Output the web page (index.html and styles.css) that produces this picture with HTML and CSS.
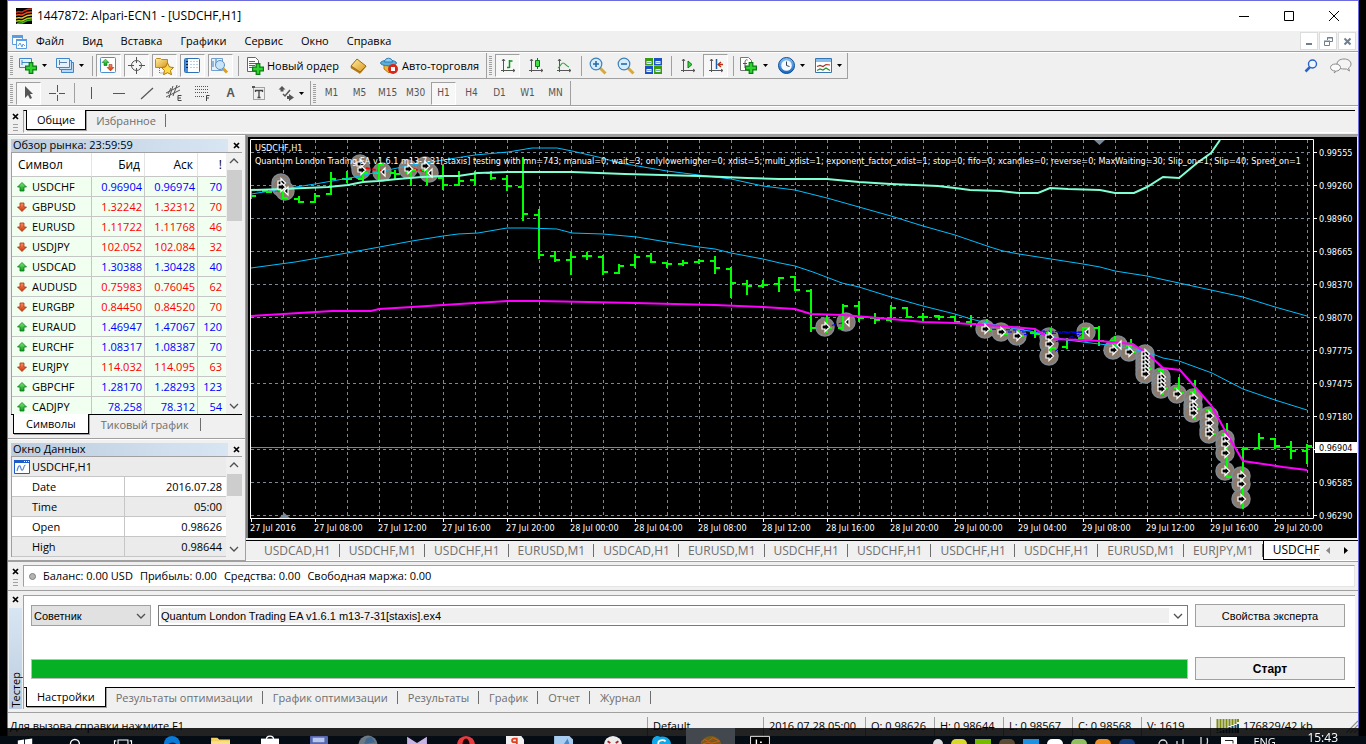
FILE: index.html
```html
<!DOCTYPE html>
<html lang="ru">
<head>
<meta charset="utf-8">
<title>1447872: Alpari-ECN1 - [USDCHF,H1]</title>
<link rel="stylesheet" href="styles.css">
</head>
<body>
<svg class="defs" aria-hidden="true">
  <defs>
    <linearGradient id="gGreen" x1="0" y1="0" x2="0" y2="1"><stop offset="0" stop-color="#7be87b"/><stop offset="1" stop-color="#0a9a1a"/></linearGradient>
    <linearGradient id="gRed" x1="0" y1="0" x2="0" y2="1"><stop offset="0" stop-color="#ff9060"/><stop offset="1" stop-color="#c83208"/></linearGradient>
    <linearGradient id="gGold" x1="0" y1="0" x2="1" y2="1"><stop offset="0" stop-color="#fff0a0"/><stop offset="1" stop-color="#d9951c"/></linearGradient>
    <linearGradient id="gBlue" x1="0" y1="0" x2="0" y2="1"><stop offset="0" stop-color="#8cc4f4"/><stop offset="1" stop-color="#1266c4"/></linearGradient>
  </defs>
  <symbol id="up" viewBox="0 0 12 12"><path d="M6 1.500l4.500 4.500H8v4H4V6H1.500z" fill="url(#gGreen)" stroke="#0b7a18" stroke-width=".8"/></symbol>
  <symbol id="down" viewBox="0 0 12 12"><path d="M6 10.500l4.500-4.500H8V2H4v4H1.500z" fill="url(#gRed)" stroke="#a83210" stroke-width=".8"/></symbol>
  <symbol id="caret" viewBox="0 0 5 3"><path d="M0 0h5L2.500 3z" fill="#000"/></symbol>
  <symbol id="chev" viewBox="0 0 10 6"><path d="M1 1l4 4 4-4" fill="none" stroke="currentColor" stroke-width="1.300"/></symbol>
  <symbol id="x" viewBox="0 0 7 7"><path d="M1 1l5 5M6 1L1 6" stroke="#000" stroke-width="1.700"/></symbol>
  <symbol id="logo" viewBox="0 0 16 16"><path d="M0 0h16v16H0z" fill="#000"/><g fill="none" stroke-width="1.500"><path d="M0 4.500c2-2 4 0 6-.500s4-3.500 10-3" stroke="#e02818"/><path d="M0 7.500c2-2 4 0 6-.500s4-3.500 10-3" stroke="#e85020"/><path d="M0 10.500c2-2 4 0 6-.500s4-3.500 10-3" stroke="#e8c020"/><path d="M0 13.500c2-2 4 0 6-.500s4-3.500 10-3" stroke="#a8d020"/><path d="M1 16c2-2 3-.500 5-1s4-3.500 10-3" stroke="#40b820"/></g></symbol>
  <symbol id="plus" viewBox="0 0 10 10"><path d="M3.500.500h3v3h3v3h-3v3h-3v-3h-3v-3h3z" fill="#2fd52f" stroke="#087a12"/></symbol>
</svg>

<div class="window">
  <header class="titlebar">
    <svg class="i16"><use href="#logo"/></svg>
    <h1>1447872: Alpari-ECN1 - [USDCHF,H1]</h1>
    <div class="winbtns">
      <button aria-label="Свернуть"><svg width="10" height="10"><path d="M0 5.500h10" stroke="#000"/></svg></button>
      <button aria-label="Развернуть"><svg width="10" height="10"><path d="M.5.5h9v9h-9z" fill="none" stroke="#000"/></svg></button>
      <button aria-label="Закрыть"><svg width="10" height="10"><path d="M0 0l10 10M10 0L0 10" stroke="#000"/></svg></button>
    </div>
  </header>

  <nav class="menubar">
    <svg class="menuicon" width="15" height="15"><path d="M.5 1.500h10v9H.500z" fill="#fff" stroke="#5b9be0"/><path d="M0 1h11v3H0z" fill="#5b9be0"/><path d="M4.500 5.500h10v9h-10z" fill="#fff" stroke="#5b9be0"/><path d="M4 5h11v2H4z" fill="#5b9be0"/><path d="M6 12l2-3 2 4 1-3 2 2" fill="none" stroke="#5b9be0"/></svg>
    <button>Файл</button><button>Вид</button><button>Вставка</button><button>Графики</button><button>Сервис</button><button>Окно</button><button>Справка</button>
    <div class="mdibtns">
      <button aria-label="Свернуть окно"><svg width="9" height="9"><path d="M1 7h6" stroke="#6f7f8f" stroke-width="2"/></svg></button>
      <button aria-label="Восстановить окно"><svg width="9" height="9"><path d="M3.500 3V.5h5v4H6M3 1h6M.5 4.500h5v4h-5zM0 4h6" fill="none" stroke="#6f7f8f"/></svg></button>
      <button aria-label="Закрыть окно"><svg width="9" height="9"><path d="M1.500 1.500l6 6M7.500 1.500l-6 6" stroke="#6f7f8f" stroke-width="2"/></svg></button>
    </div>
  </nav>

  <div class="toolbar">
    <div class="group">
      <i class="grip"></i>
      <button class="tb drop" aria-label="Новый график"><svg width="18" height="18"><path d="M.5 1.500h12v9H.500z" fill="#e4f1fd" stroke="#3f86c8"/><path d="M3 3v5M3 5.500h7" stroke="#3f86c8" fill="none"/><use href="#plus" x="6" y="5" width="12" height="12"/></svg><svg class="caret"><use href="#caret"/></svg></button>
      <button class="tb drop" aria-label="Профили"><svg width="18" height="18"><path d="M5.500 5.500h12v10h-12z" fill="#b9d8f5" stroke="#3f86c8"/><path d="M3.500 3.500h12v9h-12z" fill="#cfe4f8" stroke="#3f86c8"/><path d="M.5 1.500h13v9H.500z" fill="#e4f1fd" stroke="#3f86c8"/><path d="M3.500 3v5M3 5.500h8" stroke="#5b7fa8" fill="none"/></svg><svg class="caret"><use href="#caret"/></svg></button>
      <i class="sep"></i>
      <button class="tb on" aria-label="Обзор рынка"><svg width="17" height="17"><rect x=".5" y=".5" width="15" height="15" rx="1" fill="#fff" stroke="#4a90d0"/><use href="#up" x="1" y="1" width="9" height="9"/><use href="#down" x="6" y="6" width="9" height="9"/></svg></button>
      <button class="tb on" aria-label="Окно данных"><svg width="17" height="17"><circle cx="8.500" cy="8.500" r="5" fill="none" stroke="#555"/><path d="M8.500 0v6M8.500 11v6M0 8.500h6M11 8.500h6" stroke="#555"/></svg></button>
      <button class="tb on" aria-label="Навигатор"><svg width="19" height="18"><path d="M.5 2.500l1-1h4l1 1h6v8H.500z" fill="url(#gGold)" stroke="#b98a1c"/><path d="M4.500 11v5h4" stroke="#777" fill="none" stroke-dasharray="1 1"/><path d="M12.500 6l2 4 4 .5-3 3 1 4.200-4-2-4 2 1-4.200-3-3 4-.5z" fill="#ffd84a" stroke="#a8790f"/></svg></button>
      <button class="tb on" aria-label="Терминал"><svg width="17" height="16"><rect x=".5" y=".5" width="15" height="14" rx="1" fill="#fff" stroke="#2f6fb4"/><path d="M1 1h3v13H1z" fill="#4a8fd8"/><path d="M2 3.500h2M2 6.500h2M2 9.500h2" stroke="#123"/><path d="M6 3.500h9M6 6.500h9M6 9.500h9" stroke="#b7cfe8" stroke-dasharray="2 1"/></svg></button>
      <button class="tb on" aria-label="Тестер стратегий"><svg width="19" height="18"><path d="M.5 1.500h11v12H.500z" fill="#e4f1fd" stroke="#6fa0d0"/><path d="M2 4v6M5 2v6M8 4v5" stroke="#4878a8"/><path d="M12 11.500l4 4" stroke="#d8a020" stroke-width="3"/><circle cx="9" cy="8" r="4.500" fill="#c8e4f8" stroke="#5b8fc0"/></svg></button>
      <i class="sep"></i>
      <button class="tb wide"><svg width="17" height="18"><path d="M.5.5h8l3 3v11H.500z" fill="#fff" stroke="#666"/><path d="M2 4.500h6M2 6.500h7M2 8.500h6M2 10.500h5" stroke="#666"/><use href="#plus" x="5" y="6" width="12" height="12"/></svg>Новый ордер</button>
      <button class="tb" aria-label="Редактор MetaEditor"><svg width="18" height="16"><path d="M1 8l6-7 9 7-6 6z" fill="url(#gGold)" stroke="#9a6a10"/><path d="M1 8v2l9 5.500 6-7V8l-6 6z" fill="#b87818" stroke="#9a6a10" stroke-width=".5"/></svg></button>
      <button class="tb wide"><svg width="19" height="18"><path d="M4 7v5l5 4 4-5z" fill="#f0b832" stroke="#b07c14"/><ellipse cx="8.500" cy="6" rx="8" ry="2.800" fill="#5aaede" stroke="#2f7cae"/><path d="M4.500 5c0-5 8-5 8 0z" fill="#8fd0f4" stroke="#2f7cae"/><circle cx="13" cy="12" r="5" fill="#d8281a"/><path d="M11 10h4v4h-4z" fill="#fff"/></svg>Авто-торговля</button>
    </div>
    <div class="group">
      <i class="grip"></i>
      <button class="tb on" aria-label="Бары"><svg width="16" height="16"><path d="M3.500 1v13M1 12.500h14M2 3l1.500-2L5 3M13 11l2 1.500-2 1.500" fill="none" stroke="#555"/><path d="M9.500 2v8M7 9.500h2.500M9.500 3h3" stroke="#0a9a1a" stroke-width="1.500"/></svg></button>
      <button class="tb" aria-label="Японские свечи"><svg width="16" height="16"><path d="M3.500 1v13M1 12.500h14M2 3l1.500-2L5 3M13 11l2 1.500-2 1.500" fill="none" stroke="#555"/><path d="M9.500 0v11" stroke="#087a12"/><path d="M7.500 2.500h4v6h-4z" fill="#3fe03f" stroke="#087a12"/></svg></button>
      <button class="tb" aria-label="Линия"><svg width="16" height="16"><path d="M3.500 1v13M1 12.500h14M2 3l1.500-2L5 3M13 11l2 1.500-2 1.500" fill="none" stroke="#555"/><path d="M2 10c2-1 3-5 5-5s3 3 6 4" fill="none" stroke="#2fa040" stroke-width="1.200"/></svg></button>
      <i class="sep"></i>
      <button class="tb" aria-label="Увеличить"><svg width="18" height="18"><path d="M11 11l5.500 5.500" stroke="#d8a838" stroke-width="3"/><circle cx="7" cy="7" r="5.800" fill="#d4ecfc" stroke="#3f80b8" stroke-width="1.200"/><path d="M4 7h6M7 4v6" stroke="#2868a8" stroke-width="1.600"/></svg></button>
      <button class="tb" aria-label="Уменьшить"><svg width="18" height="18"><path d="M11 11l5.500 5.500" stroke="#d8a838" stroke-width="3"/><circle cx="7" cy="7" r="5.800" fill="#d4ecfc" stroke="#3f80b8" stroke-width="1.200"/><path d="M4 7h6" stroke="#2868a8" stroke-width="1.600"/></svg></button>
      <button class="tb" aria-label="Окна рядом"><svg width="17" height="16"><path d="M0 0h8v7.500H0zM9 8h8v8H9z" fill="#3c9c10"/><path d="M9 0h8v7.500H9zM0 8h8v8H0z" fill="#1c50c8"/><path d="M1.500 3h5v3h-5zM10.500 3h5v3h-5zM1.500 11h5v3h-5zM10.500 11h5v3h-5z" fill="#e4f0fc"/><path d="M2 4.500h4M11 4.500h4M2 12.500h4M11 12.500h4" stroke="#7fa8c8"/></svg></button>
      <i class="sep"></i>
      <button class="tb" aria-label="Автопрокрутка"><svg width="16" height="16"><path d="M3.500 1v13M1 12.500h14M2 3l1.500-2L5 3M13 11l2 1.500-2 1.500" fill="none" stroke="#555"/><path d="M8 3l4 3.500L8 10z" fill="#3fd03f" stroke="#087a12"/></svg></button>
      <button class="tb on" aria-label="Сдвиг графика"><svg width="16" height="16"><path d="M3.500 1v13M1 12.500h14M2 3l1.500-2L5 3M13 11l2 1.500-2 1.500" fill="none" stroke="#555"/><path d="M8.500 1v10" stroke="#1c60a8" stroke-width="1.500"/><path d="M15 6.500h-4M13 4l-3 2.500L13 9" fill="none" stroke="#b83010" stroke-width="1.300"/></svg></button>
      <i class="sep"></i>
      <button class="tb drop" aria-label="Индикаторы"><svg width="18" height="18"><path d="M.5.5h8l3 3v10H.500z" fill="#fff" stroke="#777"/><path d="M7.500 3c-2-1-2.500 1-2.500 3v5M3 6.500h4" fill="none" stroke="#555"/><use href="#plus" x="5" y="5" width="12" height="12"/></svg><svg class="caret"><use href="#caret"/></svg></button>
      <button class="tb drop" aria-label="Периоды"><svg width="17" height="17"><circle cx="8.500" cy="8.500" r="8" fill="url(#gBlue)" stroke="#0b4c94"/><circle cx="8.500" cy="8.500" r="5.300" fill="#f4faff"/><path d="M8.500 4.500v4l3 1" fill="none" stroke="#345"/></svg><svg class="caret"><use href="#caret"/></svg></button>
      <button class="tb drop" aria-label="Шаблоны"><svg width="17" height="16"><path d="M.5.5h16v14H.500z" fill="#fff" stroke="#3474b0"/><path d="M1 1h15v3H1z" fill="#8cbcec"/><path d="M2 8.500l3-1 3 1 3-2 4 .5" fill="none" stroke="#a83020" stroke-width="1.200"/><path d="M2 12.500l3-1.500 3 1 3-2 4 2.500" fill="none" stroke="#209030" stroke-width="1.200"/></svg><svg class="caret"><use href="#caret"/></svg></button>
    </div>
    <div class="right">
      <button class="tb" aria-label="Поиск"><svg width="14" height="14"><path d="M1.500 12.500l4.500-4.500" stroke="#2a62c8" stroke-width="2.500"/><circle cx="8.500" cy="5" r="4" fill="#eef5ff" stroke="#2a62c8" stroke-width="1.400"/></svg></button>
      <button class="tb" aria-label="Чат"><svg width="22" height="16"><path d="M14 11c-4 0-7-2-7-5s3-5 7-5 7 2 7 5c0 2-1 3-2.500 4l1 3-3-2z" fill="#f4f4f4" stroke="#8a8a8a"/><path d="M5.500 13c-3 0-5-1.500-5-3.500s2-3.500 5-3.500 5 1.500 5 3.500-2 3.500-4 3.500l-2.500 2z" fill="#fafafa" stroke="#8a8a8a"/></svg></button>
    </div>
  </div>

  <div class="toolbar second">
    <div class="group">
      <i class="grip"></i>
      <button class="tb on" aria-label="Курсор"><svg width="12" height="16"><path d="M2 1l8 8H7l2 4-2 1-2-4-3 3z" fill="#555"/></svg></button>
      <button class="tb" aria-label="Перекрестие"><svg width="16" height="16"><path d="M8.500 0v7M8.500 10v6M0 8.500h7M10 8.500h6" stroke="#555"/></svg></button>
      <i class="sep"></i>
      <button class="tb" aria-label="Вертикальная линия"><svg width="16" height="16"><path d="M8.500 2v12" stroke="#555"/></svg></button>
      <button class="tb" aria-label="Горизонтальная линия"><svg width="16" height="16"><path d="M2 8.500h12" stroke="#555"/></svg></button>
      <button class="tb" aria-label="Трендовая линия"><svg width="16" height="16"><path d="M2 14L14 3" stroke="#555" stroke-width="1.200"/></svg></button>
      <button class="tb" aria-label="Канал"><svg width="18" height="18"><path d="M0 9L14 2M0 13l14-7M3 14l4-12M7 12l4-11M2 10l3-6" stroke="#555"/><path d="M15.500 11.500h-3.500v5h3.500M12 14h3" fill="none" stroke="#444"/></svg></button>
      <button class="tb" aria-label="Фибоначчи"><svg width="18" height="18"><path d="M1 2.500h13M1 5.500h13M1 8.500h13M1 12.500h9" stroke="#555" stroke-dasharray="1 1"/><path d="M15.500 11.500h-3v5.500M12 14h3" fill="none" stroke="#444"/></svg></button>
      <button class="tb tlabel" aria-label="Текст"><b>A</b></button>
      <button class="tb" aria-label="Метка"><svg width="15" height="16"><path d="M2.500 2.500h11v12h-11z" fill="none" stroke="#555" stroke-dasharray="1 1"/><path d="M4.500 7V5.500h7V7M8 5.500v7M6.500 12.500h3" fill="none" stroke="#444" stroke-width="1.300"/><path d="M1 1h3v2H1z" fill="#555"/></svg></button>
      <button class="tb drop" aria-label="Стрелки"><svg width="16" height="16"><path d="M4 1l3.500 3.500h-2v2h-3v-2H.500z M9 11h2V9l5 3.500L11 16v-2H9z" fill="#555"/><path d="M5 9l2 2 5-6" fill="none" stroke="#555" stroke-width="1.500"/></svg><svg class="caret"><use href="#caret"/></svg></button>
    </div>
    <div class="group tf">
      <i class="grip"></i>
      <button class="tb">M1</button><button class="tb">M5</button><button class="tb">M15</button><button class="tb">M30</button><button class="tb on">H1</button><button class="tb">H4</button><button class="tb">D1</button><button class="tb">W1</button><button class="tb">MN</button>
    </div>
  </div>

  <div class="favbar">
    <div class="dock"><button class="close" aria-label="Закрыть панель"><svg width="7" height="7"><use href="#x"/></svg></button><i class="minigrip"></i></div>
    <div class="tabs"><button class="tab active">Общие</button><button class="tab">Избранное</button></div>
  </div>

  <main class="work">
    <aside class="side">
      <section class="pane market">
        <div class="panehead"><h2>Обзор рынка: 23:59:59</h2><button class="close" aria-label="Закрыть обзор рынка"><svg width="7" height="7"><use href="#x"/></svg></button></div>
        <div class="panebody">
          <div class="clip">
          <table class="quotes">
            <colgroup><col class="c1"><col class="c2"><col class="c2"><col></colgroup>
            <thead><tr><th>Символ</th><th>Бид</th><th>Аск</th><th>!</th></tr></thead>
            <tbody>
              <tr class="u"><td><svg><use href="#up"/></svg>USDCHF</td><td>0.96904</td><td>0.96974</td><td>70</td></tr>
              <tr class="d"><td><svg><use href="#down"/></svg>GBPUSD</td><td>1.32242</td><td>1.32312</td><td>70</td></tr>
              <tr class="d"><td><svg><use href="#down"/></svg>EURUSD</td><td>1.11722</td><td>1.11768</td><td>46</td></tr>
              <tr class="d"><td><svg><use href="#down"/></svg>USDJPY</td><td>102.052</td><td>102.084</td><td>32</td></tr>
              <tr class="u"><td><svg><use href="#up"/></svg>USDCAD</td><td>1.30388</td><td>1.30428</td><td>40</td></tr>
              <tr class="d"><td><svg><use href="#down"/></svg>AUDUSD</td><td>0.75983</td><td>0.76045</td><td>62</td></tr>
              <tr class="d"><td><svg><use href="#down"/></svg>EURGBP</td><td>0.84450</td><td>0.84520</td><td>70</td></tr>
              <tr class="u"><td><svg><use href="#up"/></svg>EURAUD</td><td>1.46947</td><td>1.47067</td><td>120</td></tr>
              <tr class="u"><td><svg><use href="#up"/></svg>EURCHF</td><td>1.08317</td><td>1.08387</td><td>70</td></tr>
              <tr class="d"><td><svg><use href="#down"/></svg>EURJPY</td><td>114.032</td><td>114.095</td><td>63</td></tr>
              <tr class="u"><td><svg><use href="#up"/></svg>GBPCHF</td><td>1.28170</td><td>1.28293</td><td>123</td></tr>
              <tr class="u"><td><svg><use href="#up"/></svg>CADJPY</td><td>78.258</td><td>78.312</td><td>54</td></tr>
            </tbody>
          </table>
          </div>
          <div class="scroll"><svg class="chev flip"><use href="#chev"/></svg><i class="thumb"></i><svg class="chev"><use href="#chev"/></svg></div>
        </div>
        <div class="tabs"><button class="tab active">Символы</button><button class="tab">Тиковый график</button></div>
      </section>
      <section class="pane data">
        <div class="panehead"><h2>Окно Данных</h2><button class="close" aria-label="Закрыть окно данных"><svg width="7" height="7"><use href="#x"/></svg></button></div>
        <div class="panebody">
          <div class="clip">
          <table class="values">
            <colgroup><col class="name"><col></colgroup>
            <tbody>
              <tr><th colspan="2" class="symbol"><svg width="16" height="14"><path d="M.5.5h15v13H.500z" fill="#fff" stroke="#1c5cc8"/><path d="M0 0h16v3H0z" fill="#1c5cc8"/><path d="M3 11c1-4 2-6 3-5s1 5 2.500 4 1-5 3-5" fill="none" stroke="#5b84d8" stroke-width="1.200"/><path d="M10 1.500h1M12 1.500h1M14 1.500h1" stroke="#fff"/></svg>USDCHF,H1</th></tr>
              <tr><th>Date</th><td>2016.07.28</td></tr>
              <tr><th>Time</th><td>05:00</td></tr>
              <tr><th>Open</th><td>0.98626</td></tr>
              <tr><th>High</th><td>0.98644</td></tr>
            </tbody>
          </table>
          </div>
          <div class="scroll"><svg class="chev flip"><use href="#chev"/></svg><i class="thumb short"></i><svg class="chev"><use href="#chev"/></svg></div>
        </div>
      </section>
    </aside>

    <section class="chartcol">
      <div class="chart">
        <svg id="chart" viewBox="248 137 1109 401" preserveAspectRatio="xMinYMin meet" role="img" aria-label="USDCHF,H1"></svg>
      </div>
      <div class="charttabs">
        <div class="tablist"><button class="tab">USDCAD,H1</button><button class="tab">USDCHF,M1</button><button class="tab">USDCHF,H1</button><button class="tab">EURUSD,M1</button><button class="tab">USDCAD,H1</button><button class="tab">EURUSD,M1</button><button class="tab">USDCHF,H1</button><button class="tab">USDCHF,H1</button><button class="tab">USDCHF,H1</button><button class="tab">USDCHF,H1</button><button class="tab">EURUSD,M1</button><button class="tab">EURJPY,M1</button><button class="tab active">USDCHF,H1</button></div>
        <div class="arrows"><button aria-label="Назад"><svg width="4" height="7"><path d="M4 0v7L0 3.500z" fill="#888"/></svg></button><button aria-label="Вперёд"><svg width="4" height="7"><path d="M0 0v7l4-3.500z" fill="#000"/></svg></button></div>
      </div>
    </section>
  </main>

  <section class="balance">
    <div class="dock"><button class="close" aria-label="Закрыть терминал"><svg width="7" height="7"><use href="#x"/></svg></button><i class="minigrip"></i></div>
    <p><i class="dot"></i><span>Баланс: 0.00 USD</span><span>Прибыль: 0.00</span><span>Средства: 0.00</span><span>Свободная маржа: 0.00</span></p>
  </section>

  <section class="tester">
    <div class="strip"><button class="close" aria-label="Закрыть тестер"><svg width="7" height="7"><use href="#x"/></svg></button><div class="vlabel"><span>Тестер</span></div></div>
    <div class="testbody">
      <div class="form">
        <label class="combo kind"><select aria-label="Тип"><option>Советник</option></select><svg class="chev"><use href="#chev"/></svg></label>
        <label class="combo expert"><select aria-label="Эксперт"><option>Quantum London Trading EA v1.6.1 m13-7-31[staxis].ex4</option></select><svg class="chev"><use href="#chev"/></svg></label>
        <button class="push">Свойства эксперта</button>
        <div class="bar" role="progressbar" aria-label="Ход теста" aria-valuenow="100"></div>
        <button class="push start">Старт</button>
      </div>
      <div class="tabs"><button class="tab active">Настройки</button><button class="tab">Результаты оптимизации</button><button class="tab">График оптимизации</button><button class="tab">Результаты</button><button class="tab">График</button><button class="tab">Отчет</button><button class="tab">Журнал</button></div>
    </div>
  </section>

  <footer class="status">
    <span class="help">Для вызова справки нажмите F1</span><span class="prof">Default</span><span class="time">2016.07.28 05:00</span><span class="ohlc">O: 0.98626</span><span class="ohlc">H: 0.98644</span><span class="ohlc">L: 0.98567</span><span class="ohlc">C: 0.98568</span><span class="ohlc">V: 1619</span><span class="net"><svg width="23" height="14"><path d="M1.500 0v12M4.500 0v11M7.500 0v10M10.500 0v9M13.500 0v7M16.500 0v6M19.500 0v5M22 0v3" stroke="#7c8c14" stroke-width="2"/><path d="M1.500 14v-1M4.500 14v-2M7.500 14v-3M10.500 14v-4M13.500 14V8M16.500 14V7M19.500 14V6M22 14V5" stroke="#14506c" stroke-width="2"/></svg>176829/42 kb<svg class="sizer" width="12" height="14"><path d="M0 14L12 2M4 14l8-8M8 14l4-4" stroke="#8a8a8a" stroke-width="1.200"/></svg></span>
  </footer>
</div>

<div class="taskbar">
  <div class="apps">
    <a href="#" aria-label="Пуск"><svg viewBox="0 0 24 10"><path d="M4 6l7-1v5H4zM12 5l8-1v6h-8z" fill="#fff"/></svg></a>
    <a href="#" aria-label="Поиск"><svg viewBox="0 0 24 10"><circle cx="13" cy="10" r="5" fill="none" stroke="#fff" stroke-width="1.500"/></svg></a>
    <a href="#" aria-label="Представление задач"><svg viewBox="0 0 24 10"><path d="M6.500 10V5.500h11V10M2.500 10V6.500h2M21.500 10V6.500h-2" fill="none" stroke="#fff" stroke-width="1.200"/></svg></a>
    <a href="#" aria-label="Edge"><svg viewBox="0 0 24 10"><circle cx="12" cy="10" r="9" fill="#0a7ad8"/><path d="M8 10a5 3 0 0 1 9 0z" fill="#04203c"/></svg></a>
    <a href="#" aria-label="Проводник"><svg viewBox="0 0 24 10"><path d="M1 3h7l2 2h12v5H1z" fill="#f4d060"/><path d="M1 7h21v3H1z" fill="#f9e08c"/></svg></a>
    <a href="#" aria-label="Магазин"><svg viewBox="0 0 24 10"><path d="M2 4h20v6H2z" fill="#fff"/><path d="M8 5c0-5 8-5 8 0" fill="none" stroke="#fff" stroke-width="1.500"/></svg></a>
    <a href="#" aria-label="Диск"><svg viewBox="0 0 24 10"><rect x="2" y="1" width="20" height="12" rx="1" fill="#5868b0"/><path d="M5 3h13v5H5z" fill="#b8c4ec"/></svg></a>
    <a href="#" aria-label="Сеть"><svg viewBox="0 0 24 10"><circle cx="12" cy="11" r="10.500" fill="#6c7884"/><path d="M8 10l2-6 6-2 4 6z" fill="#3f6890"/></svg></a>
    <a href="#" aria-label="Visual Studio"><svg viewBox="0 0 24 10"><path d="M1 2l11 7 11-7v8H1z" fill="#c8b4e4"/></svg></a>
    <a href="#" aria-label="Opera"><svg viewBox="0 0 24 10"><ellipse cx="12" cy="11" rx="10" ry="10" fill="#e83c40"/><ellipse cx="12" cy="11" rx="4" ry="7" fill="#1a0808"/></svg></a>
    <a href="#" aria-label="Яндекс"><svg viewBox="0 0 24 10"><path d="M2 1h17l3 4v5H2z" fill="#f0f0f0"/><path d="M14 10V4h-3c-3 0-3 4 0 4h3" fill="none" stroke="#e04020" stroke-width="2"/></svg></a>
    <a href="#" aria-label="Документ"><svg viewBox="0 0 24 10"><path d="M1 1h17l4 4v5H1z" fill="#a8ccf0"/><path d="M12 10l4-6 2 6z" fill="#4f88c8"/></svg></a>
    <a href="#" aria-label="Игра"><svg viewBox="0 0 24 10"><circle cx="12" cy="11" r="10" fill="#ececec"/><path d="M6 7l3 2M18 7l-3 2" stroke="#b02020" stroke-width="2"/></svg></a>
    <a href="#" aria-label="Skype"><svg viewBox="0 0 24 10"><path d="M1 10c-1-9 6-10 9-8 7-2 12 3 12 8z" fill="#10a8e8"/><path d="M8 10c-1-5 6-5 8-3" fill="none" stroke="#fff" stroke-width="2"/></svg></a>
    <a href="#" class="current" aria-label="MetaTrader"><svg viewBox="0 0 24 10"><circle cx="12" cy="13" r="12" fill="#7a5c18"/><path d="M1 8l4-3 4 2 5-4 8 4M3 10l5-2 5 1 8-2" fill="none" stroke="#d06020"/></svg></a>
    <a href="#" aria-label="Консоль"><svg viewBox="0 0 24 10"><path d="M1.500 12V1.500h21V12" fill="#000" stroke="#fff"/><path d="M8 5v5M12 8h2" stroke="#fff" stroke-width="1.500"/></svg></a>
  </div>
  <div class="tray">
    <i class="t1"></i><i class="t2"></i><i class="t3"></i><i class="t4"></i><i class="t5"></i><i class="t6"></i><i class="t7"></i><i class="t8"></i><i class="t9"></i>
    <svg class="sys" width="100" height="7"><path d="M16 7a4 4 0 0 1 8 0M40 7V2M34 7V4M58 0v7M64 1a9 9 0 0 1 0 6" fill="none" stroke="#ddd" stroke-width="1.300"/><path d="M78 0h16v7H78z" fill="#fff"/><path d="M82 3.500h8v3" stroke="#222" fill="none"/></svg>
    <span class="lang">ENG</span>
    <time>15:43</time>
  </div>
</div>
<script src="chart.js"></script>
</body>
</html>
```
FILE: styles.css
```css
* { box-sizing: border-box; }
html, body { height: 100%; }
body {
  margin: 0;
  background: #000;
  color: #000;
  font: 11px/16px "Open Sans", "Noto Sans", sans-serif;
  overflow: hidden;
  display: flex;
  flex-direction: column;
}
button { font: inherit; color: inherit; background: none; border: 0; padding: 0; margin: 0; display: flex; align-items: center; justify-content: center; flex: none; }
h1, h2, p { margin: 0; font-weight: normal; font-size: inherit; }
svg { display: block; flex: none; }
i { display: block; flex: none; }
.defs { position: absolute; width: 0; height: 0; }

.window {
  flex: 1;
  min-height: 0;
  margin: 0 7px 8px;
  border: 1px solid #6c6ce0;
  border-bottom: 0;
  background: #f0f0f0;
  display: flex;
  flex-direction: column;
}
.titlebar { flex: none; height: 30px; background: #fff; display: flex; align-items: center; padding: 0 2px 0 8px; font-size: 12px; }
.i16 { width: 16px; height: 16px; }
.titlebar h1 { margin-left: 5px; }
.winbtns { margin-left: auto; display: flex; }
.winbtns button { width: 45px; height: 28px; }

.menubar { flex: none; height: 21px; display: flex; align-items: center; border-bottom: 1px solid #a0a0a0; padding-left: 4px; }
.menubar > button { padding: 0 9px; }
.mdibtns { margin-left: auto; display: flex; gap: 1px; padding-right: 2px; }
.mdibtns button { width: 18px; height: 18px; background: #fff; border: 1px solid #dcdcdc; }

.toolbar { flex: none; height: 27px; display: flex; border-top: 1px solid #fff; }
.group { display: flex; align-items: center; gap: 3px; border-right: 1px solid #a0a0a0; border-bottom: 1px solid #a0a0a0; padding: 0 2px; }
.toolbar.second { border-bottom: 1px solid #a0a0a0; border-top: 0; padding-top: 2px; }
.second .group { border-bottom: 0; }
.grip { width: 3px; height: 19px; background: repeating-linear-gradient(#a0a0a0 0 1px, transparent 1px 2px); }
.sep { width: 1px; height: 20px; margin-left: 2px; background: #a0a0a0; }
.tb { width: 25px; height: 23px; }
.tb.on { background: #f7f7f7; border: 1px solid #fff; border-top-color: #a0a0a0; border-left-color: #a0a0a0; }
.tb.drop { width: 34px; gap: 5px; }
.tb.wide { width: auto; gap: 3px; padding: 0 5px; }
.caret { width: 5px; height: 3px; }
.right { margin-left: auto; display: flex; align-items: center; gap: 5px; padding-right: 5px; }
.tlabel { font: 12px/16px "Liberation Sans", sans-serif; color: #555; }
.tf .tb { font: 10px/16px "DejaVu Sans Condensed", "DejaVu Sans", sans-serif; color: #555; }

.favbar { flex: none; height: 29px; display: flex; padding: 3px 3px 0 0; border-top: 1px solid #fff; border-bottom: 1px solid #a0a0a0; }
.dock { width: 15px; flex: none; display: flex; flex-direction: column; align-items: center; gap: 3px; padding-top: 2px; }
.close { width: 9px; height: 9px; }
.minigrip { width: 5px; height: 9px; background: repeating-linear-gradient(#a0a0a0 0 1px, transparent 1px 3px); }
.tabs { flex: 1; display: flex; border-top: 1px solid #000; padding-left: 2px; min-width: 0; }
.favbar .tabs { height: 23px; flex: 1; border-left: 1px solid #a0a0a0; border-bottom: 1px solid #fff; }
.tab { position: relative; height: 19px; padding: 0 10px; color: #6e6e6e; white-space: nowrap; }
.tab:not(.active)::after { content: ""; position: absolute; right: 0; top: 3px; height: 13px; width: 1px; background: #6e6e6e; }
.tab.active { background: #fff; color: #000; border: 1px solid #000; border-top: 0; margin-top: -1px; height: 20px; box-shadow: 1px 1px 0 #a0a0a0; }

.work { flex: 1; min-height: 0; display: flex; }
.side { width: 238px; flex: none; display: flex; flex-direction: column; border-right: 1px solid #a0a0a0; }
.pane { display: flex; flex-direction: column; padding: 2px 3px 4px; min-height: 0; border-top: 1px solid #fff; border-bottom: 1px solid #a0a0a0; }
.market { flex: 1; }
.data { flex: none; height: 122px; padding-bottom: 3px; }
.panehead { flex: none; height: 14px; display: flex; align-items: center; justify-content: space-between; }
.panehead h2 { flex: 1; height: 13px; line-height: 12px; padding-left: 2px; margin-right: 4px; background: linear-gradient(90deg, #bccddf, #d8e5f3); }
.panehead .close { margin-right: 1px; }
.panebody { flex: 1; min-height: 0; display: flex; border-top: 1px solid #a0a0a0; border-left: 1px solid #a0a0a0; }
.clip { flex: 1; overflow: hidden; background: #fff; }
table { width: 100%; border-collapse: separate; border-spacing: 0; table-layout: fixed; }
th, td { padding: 0 4px; font-weight: normal; text-align: right; height: 20px; white-space: nowrap; border-bottom: 1px solid #c6c6c6; border-right: 1px solid #c6c6c6; }
td { padding-right: 2px; }
th:last-child, td:last-child { border-right: 0; padding-right: 4px; }
.quotes th { height: 24px; border-right-color: #e4e4e4; font-size: 12px; padding-right: 4px; }
.quotes th:first-child { text-align: left; padding-left: 6px; }
.quotes td { background: #f0fff0; }
.quotes td:first-child { text-align: left; color: #000; display: flex; align-items: center; gap: 4px; padding-left: 4px; }
.quotes td svg { width: 12px; height: 12px; }
.c1 { width: 80px; }
.c2 { width: 53px; }
.u td { color: #0000ff; }
.d td { color: #ff0000; }
.name { width: 113px; }
.values th { text-align: left; padding-left: 20px; }
.values tr:nth-child(odd) > * { background: #ebebeb; }
.values .symbol { padding-left: 2px; }
.symbol svg { display: inline-block; vertical-align: -3px; margin-right: 2px; }
.scroll { width: 16px; flex: none; display: flex; flex-direction: column; align-items: center; padding: 5px 0; color: #505050; background: #f0f0f0; }
.scroll .thumb { width: 15px; height: 51px; margin: 6px 0 auto; background: #cdcdcd; }
.scroll .short { height: 22px; }
.chev { width: 10px; height: 6px; }
.flip { transform: rotate(180deg); }
.market .tabs { flex: none; height: 20px; }
.market .tab { padding: 0 12px; }

.chartcol { flex: 1; min-width: 0; display: flex; flex-direction: column; }
.chart { flex: 1; min-height: 0; background: #000; border-top: 2px solid #a0a0a0; border-left: 2px solid #808080; border-right: 1px solid #e8e8e8; }
#chart { width: 100%; height: 100%; overflow: hidden; font: 9px "DejaVu Sans Condensed", "DejaVu Sans", sans-serif; }
.charttabs { flex: none; height: 21px; display: flex; margin-top: 2px; border-top: 1px solid #000; padding: 0 10px 0 9px; border-bottom: 1px solid #fff; font-size: 12px; }
.charttabs .tab { padding: 0 9px; }
.tablist { flex: 1; min-width: 0; display: flex; overflow: hidden; }
.arrows { display: flex; align-items: center; gap: 14px; padding-left: 6px; }

.balance { flex: none; height: 29px; display: flex; border-top: 1px solid #a0a0a0; padding: 3px 3px 3px 0; }
.balance p { flex: 1; background: #fff; border: 1px solid #e4e4e4; border-top-color: #a0a0a0; border-left-color: #a0a0a0; display: flex; align-items: center; gap: 7px; padding-left: 5px; }
.dot { width: 7px; height: 7px; border-radius: 50%; background: #b4b4b4; border: 1px solid #808080; }
.tester { flex: none; height: 122px; display: flex; border-top: 1px solid #a0a0a0; padding: 4px 3px 3px 0; }
.strip { width: 15px; flex: none; display: flex; flex-direction: column; align-items: center; gap: 4px; }
.vlabel { flex: 1; width: 13px; background: linear-gradient(#d8e5f3, #bccddf); display: flex; align-items: flex-end; padding-bottom: 1px; }
.vlabel span { writing-mode: vertical-rl; transform: rotate(180deg); line-height: 13px; }
.testbody { flex: 1; min-width: 0; display: flex; flex-direction: column; border-top: 1px solid #a0a0a0; border-left: 1px solid #a0a0a0; }
.form { flex: 1; background: #fff; display: grid; grid-template-columns: 120px 1fr 150px; grid-template-rows: 23px 23px; column-gap: 7px; row-gap: 30px; padding: 8px 10px 0 7px; align-items: center; }
.combo { position: relative; display: flex; height: 21px; border: 1px solid #a0a0a0; background: #e1e1e1; }
.combo select { appearance: none; flex: 1; min-width: 0; border: 0; background: none; padding: 0 2px; font: 11px/16px "Liberation Sans", sans-serif; color: #000; }
.combo .chev { position: absolute; right: 4px; top: 7px; color: #505050; pointer-events: none; }
.expert { background: #fff; border-color: #7a7a7a; padding: 2px 18px 2px 2px; }
.expert select { background: #f0f0f0; padding: 0; }
.push { height: 23px; border: 1px solid #a0a0a0; background: #f0f0f0; font: 11px/16px "Liberation Sans", sans-serif; }
.push.start { font-weight: bold; font-size: 12px; }
.bar { grid-column: 1 / 3; height: 20px; background: #06b025; border: 1px solid #bcbcbc; }
.tester .tabs { flex: none; height: 22px; }

.status { flex: none; height: 24px; display: flex; border-top: 1px solid #a0a0a0; padding-top: 4px; line-height: 17px; }
.status span { height: 20px; border-left: 1px solid #a0a0a0; padding-left: 5px; white-space: nowrap; }
.status .help { flex: 1; border: 0; padding-left: 2px; }
.prof { width: 116px; }
.time { width: 102px; }
.ohlc { width: 69px; }
.status .net { width: 148px; display: flex; gap: 4px; }
.net svg { margin-top: 2px; }
.net .sizer { margin-left: auto; }

.taskbar { position: fixed; left: 0; right: 0; bottom: 0; height: 16px; background: linear-gradient(rgba(0, 0, 0, 0.86) 0 8px, #060c14 8px); display: flex; justify-content: space-between; color: #fff; overflow: hidden; }
.apps { display: flex; }
.apps a { width: 49px; height: 16px; display: flex; align-items: flex-end; justify-content: center; }
.apps svg { width: 22px; height: 9px; }
.apps .current { background: #43484e; }
.tray { display: flex; align-items: flex-end; }
.tray i { width: 16px; height: 5px; margin-right: 8px; border-radius: 8px 8px 0 0; background: #ddd; }
.tray .t1 { width: 10px; }
.tray .t2 { background: #d8d830; }
.tray .t3 { background: #76b900; border-radius: 0; }
.tray .t4 { background: #5c4c34; }
.tray .t5 { background: #2090e0; border-radius: 0; }
.tray .t6 { background: #fff; }
.tray .t7 { background: #90c060; }
.tray .t8 { background: #f09020; }
.tray .t9 { background: #143c78; }
.lang { width: 28px; line-height: 8px; margin-left: 10px; height: 6px; }
time { font-size: 12px; line-height: 16px; margin: 0 28px 0 26px; height: 16px; padding-top: 2px; }
```
FILE: chart.js
```js
const svg = document.getElementById('chart');
const NS = 'http://www.w3.org/2000/svg';
function add(name, attrs, text, parent) {
  const el = document.createElementNS(NS, name);
  for (const k in attrs) el.setAttribute(k, attrs[k]);
  if (text !== undefined && text !== null) el.textContent = text;
  (parent || svg).appendChild(el);
  return el;
}

// Grid
let grid = '';
for (let x = 283; x <= 1307; x += 32) grid += `M${x + 0.5} 140V518`;
for (let y = 152; y <= 515; y += 33) grid += `M251 ${y + 0.5}H1313`;
add('path', { d: grid, stroke: '#778899', 'stroke-dasharray': '3 3', fill: 'none' });
add('path', { d: 'M251 447.5H1313', stroke: '#778899' });

// Plot clip area
const defs = add('defs', {});
const clip = add('clipPath', { id: 'plot' }, null, defs);
add('rect', { x: 251, y: 140, width: 1062, height: 378 }, null, clip);
const plot = add('g', { 'clip-path': 'url(#plot)', fill: 'none' });

// Trades: x, y, direction (1 entry, -1 exit)
const trades = [
  [281,183,1],[281,187,1],[285,191,-1],[360,164,1],[361,170,1],[382,172,-1],[408,169,1],[425,166,1],[429,173,-1],
  [825,327,1],[846,322,-1],[985,329,1],[1001,332,1],[1017,336,1],
  [1049,337,1],[1049,344,1],[1049,356,1],[1086,332,-1],[1118,345,-1],[1113,350,1],[1129,352,1],
  [1145,354,1],[1145,358,1],[1145,362,1],[1145,366,1],[1145,370,1],[1145,374,1],
  [1161,377,1],[1161,381,1],[1161,385,1],[1161,389,1],[1177,394,1],
  [1193,398,1],[1193,405,1],[1193,409,1],[1193,413,1],[1209,416,1],[1209,423,1],[1209,430,1],[1209,434,1],
  [1225,439,1],[1225,444,1],[1225,453,1],[1225,471,1],[1241,476,1],[1241,484,1],[1241,499,1]
];
for (const [x, y] of trades) add('circle', { cx: x, cy: y, r: 9, fill: '#8b7b6c', stroke: '#808890', 'stroke-width': 1.5 }, null, plot);

// Closed trade connectors
add('path', { d: 'M251 190.500h32M360 167l22 4M408 168l20 4', stroke: '#ff0000', 'stroke-width': 2, 'stroke-dasharray': '4 2' }, null, plot);
add('path', { d: 'M825 327l21-5M985 329l101 3.500M1001 332h85M1017 335l69-3M1049 344l37-12M1049 355l37-23M1113 350l5-5', stroke: '#0000ff', 'stroke-dasharray': '4 3' }, null, plot);

// Bars: x, high, low, open, close
const bars = [
  [251,189,199,190,196],[267,189,193,191,192],[283,185,199,190,198],[299,196,203,199,202],[315,193,203,202,196],[331,172,195,194,179],
  [347,171,183,179,179],[363,170,182,179,173],[379,164,180,173,165],[395,170,179,173,174],[411,168,186,173,170],[427,167,185,170,177],
  [443,165,190,178,185],[459,171,186,185,181],[475,171,185,180,173],[491,171,180,173,178],[507,175,191,179,186],[523,157,221,187,214],
  [539,209,259,215,255],[555,251,262,256,260],[571,252,275,260,257],[587,252,260,256,256],[603,255,275,257,272],[619,264,274,273,266],
  [635,254,268,265,257],[651,253,263,256,262],[667,262,268,263,264],[683,260,266,264,263],[699,259,264,262,261],[715,256,274,261,268],
  [731,267,298,269,283],[747,280,295,284,286],[763,280,288,286,285],[779,277,292,284,278],[795,276,291,277,290],[811,289,332,291,328],
  [827,315,333,328,328],[843,304,330,328,306],[859,301,322,306,318],[875,313,324,318,320],[891,305,322,320,308],[907,307,318,308,317],
  [923,313,321,317,317],[939,315,320,316,317],[955,316,323,317,322],[971,315,327,322,324],[987,319,332,324,330],[1003,328,336,330,334],
  [1019,329,338,334,336],[1035,330,338,333,334],[1051,328,360,333,348],[1067,338,349,347,340],[1083,327,341,339,328],[1099,326,346,328,341],
  [1115,336,352,341,346],[1131,339,354,346,352],[1147,350,370,353,369],[1163,368,395,370,388],[1179,377,393,388,393],[1195,380,420,392,409],
  [1211,408,436,410,434],[1227,423,478,434,477],[1243,448,509,476,449],[1259,433,449,448,438],[1275,438,449,439,446],[1291,441,459,447,451],[1307,444,464,451,446]
];
let d = '';
for (const [x, h, l, o, c] of bars) d += `M${x} ${h}V${l}M${x - 5} ${o}H${x}M${x} ${c}H${x + 5}`;
add('path', { d, stroke: '#00ff00', 'stroke-width': 2 }, null, plot);

const line = (points, stroke, width) => add('polyline', { points, stroke, 'stroke-width': width }, null, plot);
line('251,194 283,189 315,184 355,177 378,172 412,165 443,160 475,155 508,152 532,148 557,148 572,151 598,157 620,163 667,171 699,175 731,179 763,186 795,190 827,198 859,207 891,216 923,226 955,235 990,247 1003,251 1019,254 1051,259 1083,264 1100,267 1115,271 1147,276 1179,283 1211,290 1243,297 1275,307 1307,316', '#00bfff', 1);
line('251,268 295,262 347,253 412,241 443,236 458,234 478,233 507,228 528,228 557,229 572,233 603,234 637,237 667,242 699,247 715,249 731,253 763,259 780,263 795,266 813,272 842,283 859,287 891,297 923,306 955,314 971,319 1000,326 1035,332 1050,336 1067,340 1083,342 1099,344 1117,346 1147,352 1163,358 1179,361 1212,373 1243,389 1275,400 1307,410', '#00bfff', 1);
line('251,190 283,189 305,188 328,187 348,185 363,182 378,181 398,179 422,177 442,176 458,176 478,173 508,172 572,172 625,174 699,176 747,178 779,179 827,179 859,182 891,184 938,186 955,188 970,190 1000,191 1019,193 1038,193 1050,188 1068,189 1100,190 1115,193 1134,193 1147,187 1163,177 1179,178 1197,163 1211,153 1220,140', '#7fffd4', 2);
line('251,316 283,314 332,311 371,311 379,309 412,307 443,305 475,303 508,301 538,301 588,302 635,303 715,305 763,307 795,309 811,314 843,315 891,319 923,322 955,323 1000,326 1035,329 1051,339 1083,340 1100,341 1132,344 1147,353 1163,368 1180,370 1195,387 1211,405 1227,434 1243,461 1283,467 1307,470', '#ff00ff', 2);

// Trade arrows
for (const [x, y, dir] of trades) {
  const shape = dir > 0
    ? `M${x - 3} ${y - 2}h3v-2.500l4.500 4.500-4.500 4.500v-2.500h-3z`
    : `M${x + 3} ${y - 4}v8l-4-4z`;
  add('path', { d: shape, fill: '#000', stroke: '#fff', 'stroke-width': 1.2 }, null, plot);
}

// Frame and axis ticks
let axis = 'M250.500 518V139.500H1313.500V518.500H250';
for (let y = 152; y <= 515; y += 33) axis += `M1313 ${y + 0.5}h4`;
for (let x = 251; x <= 1307; x += 64) axis += `M${x + 0.5} 519v3`;
add('path', { d: axis, stroke: '#fff', fill: 'none' });
add('path', { d: 'M1094 140h11l-5.500 5z M279 518h11l-5.500-5z', fill: '#778899' });

const prices = ['0.99555','0.99260','0.98960','0.98665','0.98370','0.98070','0.97775','0.97475','0.97180','','0.96585','0.96290'];
prices.forEach((p, i) => p && add('text', { x: 1319, y: 156 + i * 33, fill: '#fff' }, p));
add('rect', { x: 1315, y: 442, width: 42, height: 11, fill: '#fff' });
add('text', { x: 1319, y: 451, fill: '#000' }, '0.96904');

const times = ['27 Jul 2016','27 Jul 08:00','27 Jul 12:00','27 Jul 16:00','27 Jul 20:00','28 Jul 00:00','28 Jul 04:00','28 Jul 08:00','28 Jul 12:00','28 Jul 16:00','28 Jul 20:00','29 Jul 00:00','29 Jul 04:00','29 Jul 08:00','29 Jul 12:00','29 Jul 16:00','29 Jul 20:00'];
times.forEach((t, i) => add('text', { x: 250 + i * 64, y: 531, fill: '#fff' }, t));

const caption = add('g', { 'clip-path': 'url(#plot)', fill: '#fff' });
add('text', { x: 255, y: 151 }, 'USDCHF,H1', caption);
add('text', { x: 255, y: 164 }, 'Quantum London Trading EA  v1.6.1 m13-7-31[staxis] testing with mn=743; manual=0; wait=3; onlylowerhigher=0; xdist=5; multi_xdist=1; exponent_factor_xdist=1; stop=0; fifo=0; xcandles=0; reverse=0; MaxWaiting=30; Slip_on=1; Slip=40; Spred_on=1', caption);
```
